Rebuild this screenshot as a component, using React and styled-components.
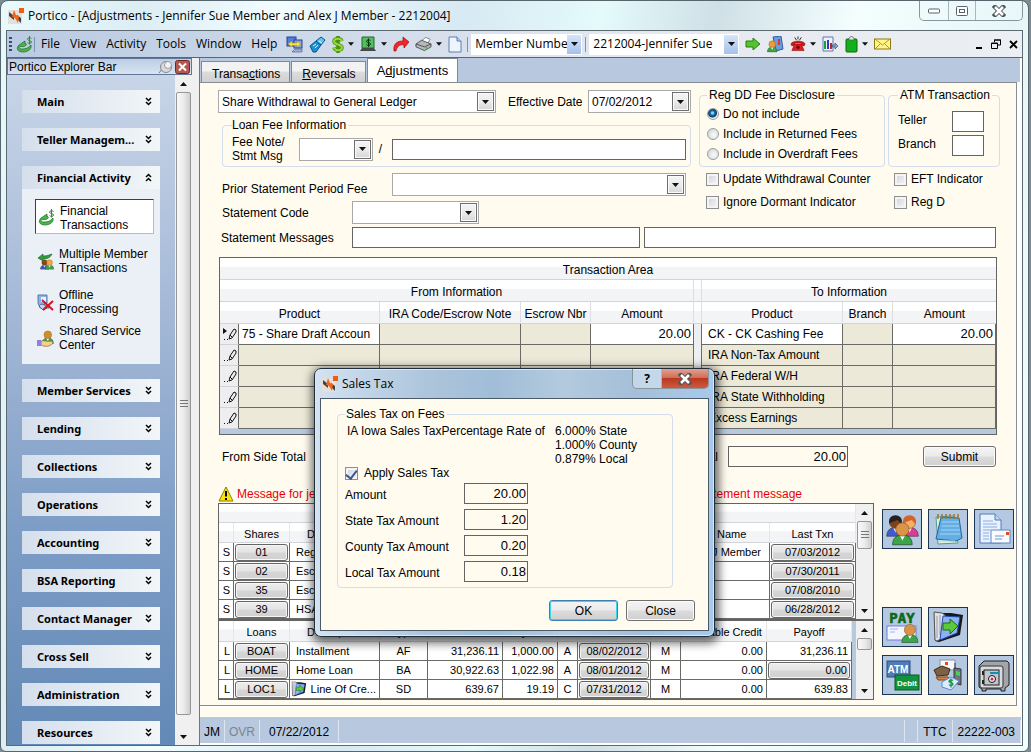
import { useState } from "react";
import styled, { createGlobalStyle, css } from "styled-components";

const GlobalStyle = createGlobalStyle`
  * {
    box-sizing: border-box;
  }
  body {
    margin: 0;
    background: #7d8a92;
    font-family: "Liberation Sans", Arial, sans-serif;
    font-size: 12px;
    line-height: 14px;
    color: #000;
  }
  button, input, select {
    font: inherit;
    color: inherit;
    margin: 0;
  }
`;

const chromeFont = css`
  font-family: "Open Sans", "Noto Sans", sans-serif;
  font-size: 12px;
`;

// ---------- window frame ----------
const Window = styled.div`
  position: relative;
  display: flex;
  flex-direction: column;
  min-height: 100vh;
  margin-right: 2px;
  padding: 0 5px 5px;
  border: 1px solid #56666c;
  border-radius: 8px 8px 6px 6px;
  background: linear-gradient(100deg, #e9fafc 0%, #dcedf4 12%, #f2fdff 24%, #d7e9f3 40%, #e4fafb 52%, #cfe0e6 62%, #f4feff 74%, #e6f6f6 88%, #f4ffff 100%);
`;

const TitleBar = styled.header`
  ${chromeFont}
  display: flex;
  align-items: center;
  gap: 4px;
  height: 29px;
  padding-left: 2px;
`;

const WindowTitle = styled.h1`
  flex: 1;
  margin: 0;
  font-size: inherit;
  font-weight: normal;
  white-space: nowrap;
`;

const WindowButtons = styled.div`
  display: flex;
  align-self: flex-start;
  height: 20px;
  border: 1px solid #87969b;
  border-top: 0;
  border-radius: 0 0 5px 5px;
  overflow: hidden;
`;

const WindowButton = styled.button`
  display: flex;
  align-items: center;
  justify-content: center;
  width: ${(props) => props.$width}px;
  padding: 0;
  border: 0;
  border-left: 1px solid #a9b6ba;
  background: ${(props) =>
    props.$danger
      ? "linear-gradient(#e2a091 0%, #d07058 45%, #b93a20 50%, #d0583e 100%)"
      : "rgba(240, 250, 252, 0.4)"};
  &:first-child {
    border-left: 0;
  }
`;

const Frame = styled.div`
  flex: 1;
  display: flex;
  flex-direction: column;
  border: 1px solid #5d6a72;
  background: #f0f0f0;
`;

// ---------- menu bar ----------
const MenuBar = styled.nav`
  ${chromeFont}
  display: flex;
  align-items: center;
  height: 27px;
  padding: 0 4px 0 2px;
  border-bottom: 1px solid #5f656d;
  background: linear-gradient(90deg, #b9cae2, #e4e9f0 62%, #eceff3);
  white-space: nowrap;
`;

const MenuItem = styled.button`
  padding: 0 5px;
  border: 0;
  background: none;
`;

const Grip = styled.span`
  width: 3px;
  height: 15px;
  margin-right: 4px;
  background: repeating-linear-gradient(#36507c 0 2px, transparent 2px 4px);
`;

const Divider = styled.span`
  width: 1px;
  height: 15px;
  margin: 0 1px;
  background: #7d93b4;
`;

const ToolIcons = styled.div`
  display: flex;
  align-items: center;
  gap: ${(props) => props.$gap}px;
  margin: 0 4px;
`;

const ToolButton = styled.button`
  display: flex;
  align-items: center;
  gap: 4px;
  padding: 0;
  border: 0;
  background: none;
`;

const ToolSelectBox = styled.label`
  display: flex;
  width: ${(props) => props.$width}px;
  height: 21px;
  margin: 0 2px;
  border: 1px solid #fff;
  background: #fff;
`;

const ToolSelect = styled.select`
  flex: 1;
  min-width: 0;
  padding: 0 0 0 3px;
  border: 0;
  background: none;
  appearance: none;
  outline: none;
`;

const ToolArrow = styled.span`
  display: flex;
  align-items: center;
  justify-content: center;
  width: 14px;
  background: linear-gradient(#d5e4f8, #a4c2ea);
`;

const ChildControls = styled.div`
  display: flex;
  align-items: center;
  gap: 8px;
  margin-left: auto;
`;

// ---------- explorer bar ----------
const Body = styled.div`
  flex: 1;
  display: flex;
`;

const Sidebar = styled.aside`
  display: flex;
  flex-direction: column;
  width: 185px;
  flex-shrink: 0;
`;

const SidebarHeader = styled.div`
  display: flex;
  align-items: center;
  gap: 2px;
  height: 17px;
  padding: 0 1px;
  border: 1px solid #62779a;
  background: linear-gradient(#bdcde3, #d9e4f2);
  h2 {
    flex: 1;
    margin: 0;
    font-size: 12px;
    font-weight: normal;
  }
`;

const HeaderButton = styled.button`
  display: flex;
  padding: 0;
  border: 0;
  background: none;
`;

const SidebarBody = styled.div`
  flex: 1;
  display: flex;
`;

const SectionList = styled.div`
  flex: 1;
  display: flex;
  flex-direction: column;
  gap: 15px;
  padding: 15px 15px 0;
  background: linear-gradient(#c8d5e8, #9db3d3 42%, #7d9dc6 68%, #6389b6);
`;

const SectionHead = styled.button`
  display: flex;
  align-items: center;
  justify-content: space-between;
  width: 100%;
  height: 23px;
  padding: 0 7px 0 15px;
  border: 0;
  background: linear-gradient(90deg, #d5dfec, #f2f6f8);
  font-family: "Noto Sans", sans-serif;
  font-size: 11px;
  font-weight: bold;
  white-space: nowrap;
`;

const SectionPanel = styled.div`
  padding: 10px 6px 12px 13px;
  background: #eaf0f5;
`;

const SectionLink = styled.a`
  display: flex;
  align-items: center;
  gap: 5px;
  margin-top: ${(props) => props.$space}px;
  padding-left: 2px;
  color: #000;
  text-decoration: none;
  ${(props) =>
    props.$active &&
    css`
      height: 35px;
      padding: 2px 0 0 2px;
      border: 1px solid;
      border-color: #3a4048 #a9bfd8 #a9bfd8 #3a4048;
      background: #fff;
    `}
`;

// ---------- scroll bars ----------
const Scroll = styled.div`
  display: flex;
  flex-direction: column;
  align-items: center;
  flex-shrink: 0;
  width: 17px;
  background: #f0f0f0;
`;

const ScrollArrow = styled.button`
  display: flex;
  align-items: center;
  justify-content: center;
  width: 100%;
  height: 17px;
  padding: 0;
  border: 0;
  background: none;
`;

const Track = styled.div`
  flex: 1;
  width: 15px;
  display: flex;
  flex-direction: column;
`;

const Thumb = styled.div`
  display: flex;
  align-items: center;
  justify-content: center;
  height: ${(props) => props.$size};
  border: 1px solid #979797;
  border-radius: 2px;
  background: linear-gradient(90deg, #f8f8f8, #ececec 50%, #cfcfcf);
`;

// ---------- main area ----------
const Main = styled.main`
  flex: 1;
  min-width: 0;
  display: flex;
  flex-direction: column;
  margin-left: 7px;
  border-left: 1px solid #6f767e;
  background: #fff;
`;

const Tabs = styled.div`
  display: flex;
  align-items: flex-end;
  height: 24px;
  padding-left: 1px;
  margin-right: 2px;
  background: #b8c9df;
`;

const Tab = styled.button`
  height: ${(props) => (props.$active ? 24 : 21)}px;
  padding: ${(props) => (props.$active ? "0 9px" : "3px 9px 0 10px")};
  border: 1px solid #84898f;
  border-bottom: 0;
  margin-right: ${(props) => (props.$active ? 0 : 1)}px;
  background: ${(props) =>
    props.$active ? "#fff" : "linear-gradient(#f2f2f2 45%, #dcdcdc 50%, #d0d0d0)"};
  font-size: ${(props) => (props.$active ? 13 : 12)}px;
`;

const Panel = styled.div`
  flex: 1;
  margin-right: 5px;
  padding: 5px 0 0 18px;
  border: 1px solid #868c94;
  border-left: 0;
  background: #fffbef;
`;

const TopForm = styled.div`
  display: grid;
  grid-template-columns: 473px 1fr;
  gap: 8px;
  margin-right: 16px;
`;

const FormRow = styled.div`
  display: flex;
  align-items: ${(props) => props.$align || "center"};
  height: ${(props) => props.$height || 23}px;
  margin-top: ${(props) => props.$space || 0}px;
`;

const FieldLabel = styled.label`
  width: ${(props) => (props.$width ? props.$width + "px" : "auto")};
  padding-left: ${(props) => props.$indent || 0}px;
  flex-shrink: 0;
`;

const ComboBox = styled.span`
  display: flex;
  align-items: center;
  width: ${(props) => props.$width}px;
  height: 23px;
  padding-right: 1px;
  border: 1px solid #a9a9a9;
  background: #fff;
`;

const ComboSelect = styled.select`
  flex: 1;
  min-width: 0;
  height: 21px;
  padding: 1px 3px 0;
  border: 0;
  background: none;
  appearance: none;
  outline: none;
`;

const ComboArrow = styled.span`
  display: flex;
  align-items: center;
  justify-content: center;
  width: 17px;
  height: 19px;
  border: 1px solid #6e6e6e;
  background: linear-gradient(#f4f4f4, #ebebeb 50%, #d6d6d6);
  box-shadow: inset 0 0 0 1px #fafafa;
`;

const TextInput = styled.input`
  width: ${(props) => (props.$width ? props.$width + "px" : "100%")};
  height: 21px;
  padding: 0 1px 0 3px;
  border: 1px solid #646464;
  background: ${(props) => (props.$plain ? "transparent" : "#fff")};
  outline: none;
  ${(props) =>
    props.$number &&
    css`
      font-size: 13px;
      text-align: right;
    `}
`;

const Group = styled.fieldset`
  min-width: 0;
  margin: 0;
  padding: ${(props) => props.$pad};
  border: 1px solid #d3ddeb;
  border-radius: 4px;
  legend {
    padding: 0 2px;
    line-height: 14px;
    white-space: nowrap;
  }
`;

const LoanGroup = styled(Group)`
  margin: 3px 0 0 4px;
  legend {
    padding-left: 0;
  }
`;

const LoanFields = styled.div`
  display: flex;
  align-items: center;
`;

const Slash = styled.span`
  width: 19px;
  padding-right: 4px;
  text-align: center;
`;

const RightForm = styled.div`
  display: grid;
  grid-template-columns: 186px 1fr;
  grid-template-rows: 79px 23px 23px;
  column-gap: 3px;
`;

const Option = styled.label`
  display: flex;
  align-items: center;
  gap: 4px;
  height: ${(props) => props.$height}px;
  padding-left: ${(props) => props.$indent || 0}px;
  white-space: nowrap;
`;

const CheckBox = styled.input`
  width: 13px;
  height: 13px;
  flex-shrink: 0;
  appearance: none;
  border: 1px solid #8e8f8f;
  background: linear-gradient(135deg, #cfd3d8, #f6f6f6);
  box-shadow: inset 0 0 0 2px #f4f4f4;
  display: flex;
  justify-content: center;
  &:checked::before {
    content: "";
    width: 5px;
    height: 9px;
    border: solid #3c5593;
    border-width: 0 2px 2px 0;
    transform: rotate(38deg);
  }
`;

const Radio = styled.input`
  width: 12px;
  height: 12px;
  flex-shrink: 0;
  appearance: none;
  border: 1px solid #9a9c9e;
  border-radius: 50%;
  background: radial-gradient(circle at 60% 60%, #fafafa, #ccd0d4);
  &:checked {
    background: radial-gradient(circle at 45% 40%, #7fd8f7 0 1px, #1f78ae 2px, #0b3a66 4px, #e8eef2 5px);
  }
`;

const AtmFields = styled.div`
  display: grid;
  grid-template-columns: 54px 32px;
  gap: 3px 0;
  label {
    padding-top: 2px;
  }
`;

const MessageRow = styled.div`
  display: grid;
  grid-template-columns: 130px 288px 1fr;
  column-gap: 4px;
  align-items: center;
  margin: 3px 20px 0 0;
  label {
    padding-left: 3px;
  }
`;

// ---------- transaction grid ----------
const headGradient = css`
  background: linear-gradient(#fff 40%, #f3f4f6 45%, #f3f4f6);
  border-bottom: 1px solid #d2d4d8;
`;

const GridBox = styled.div`
  margin: 9px 19px 0 1px;
  padding-bottom: 5px;
  border: 1px solid #646464;
  background: #b8c9df;
`;

const TxnTable = styled.table`
  width: 100%;
  table-layout: fixed;
  border-spacing: 0;
  th {
    ${headGradient}
    height: 22px;
    padding: 2px 0 0;
    border-right: 1px solid #dcdee2;
    font-weight: normal;
    white-space: nowrap;
  }
  th:last-child {
    border-right: 0;
  }
`;

const TxnCell = styled.td`
  height: 21px;
  padding: 0 2px;
  border-right: 1px solid #6b6b66;
  border-bottom: 1px solid #6b6b66;
  background: ${(props) => (props.$open ? "#fff" : "#ece9d8")};
  font-size: ${(props) => (props.$number ? 13 : 12)}px;
  text-align: ${(props) => (props.$number ? "right" : "left")};
  padding-left: ${(props) => props.$indent || 2}px;
  white-space: nowrap;
`;

const RowMarker = styled.td`
  height: 21px;
  padding: 0;
  border-right: 1px solid #6b6b66;
  background: #eeeef0;
  line-height: 0;
  text-align: right;
  border-bottom: 1px solid #d0d2d6;
`;

const GapCell = styled.td`
  padding: 0;
  border-right: 1px solid #6b6b66;
  background: #eeeff2;
`;

const Totals = styled.div`
  display: flex;
  align-items: center;
  gap: 10px;
  margin: 11px 20px 0 4px;
`;

const Spacer = styled.span`
  flex: 1;
`;

const PushButton = styled.button`
  width: ${(props) => props.$width}px;
  height: 21px;
  padding: 1px 0 0;
  border: 1px solid ${(props) => (props.$default ? "#3c7fb1" : "#707070")};
  border-radius: 3px;
  background: linear-gradient(#f4f4f4, #ebebeb 48%, #dcdcdc 52%, #cfcfcf);
  box-shadow: inset 0 0 0 1px ${(props) => (props.$default ? "#45d0f4" : "#fbfbfb")};
`;

const SubmitButton = styled(PushButton)`
  margin-left: 65px;
`;

const Warning = styled.div`
  display: flex;
  align-items: center;
  justify-content: space-between;
  height: 18px;
  margin-top: 18px;
  width: 584px;
  color: #e8000d;
  span {
    display: flex;
    gap: 3px;
    align-items: center;
  }
`;

// ---------- account grids ----------
const BottomRow = styled.div`
  display: flex;
  align-items: flex-start;
  gap: 8px;
  margin-right: 2px;
`;

const AccountBox = styled.div`
  flex: 1;
  min-width: 0;
  border: 1px solid #646464;
  background: #b8c9df;
  font-size: 11px;
`;

const AccountPart = styled.div`
  display: flex;
  & + & {
    border-top: 2px solid #646464;
  }
`;

const AccountTable = styled.table`
  flex: 1;
  min-width: 0;
  width: 0;
  margin-right: ${(props) => props.$gutter || 0}px;
  table-layout: fixed;
  border-spacing: 0;
  background: #fff;
  th {
    ${headGradient}
    height: ${(props) => props.$head}px;
    padding: 2px 0 0;
    border-right: 1px solid #e4e6ea;
    font-weight: normal;
    white-space: nowrap;
  }
  th:first-child[colspan] {
    height: 19px;
  }
`;

const AccountCell = styled.td`
  height: 19px;
  padding: ${(props) => (props.$button ? "0 1px" : "0 3px")};
  border-right: 1px solid #6b6b66;
  border-bottom: 1px solid #6b6b66;
  text-align: ${(props) => props.$align || "left"};
  white-space: nowrap;
  overflow: hidden;
  line-height: 13px;
`;

const NameCell = styled(AccountCell)`
  padding-right: 8px;
  text-align: right;
`;

const CellButton = styled.button`
  display: block;
  width: 100%;
  height: 17px;
  padding: 0 2px;
  border: 1px solid #666;
  border-radius: 3px;
  background: linear-gradient(#ededed, #e4e4e4 48%, #d6d6d6 52%, #d0d0d0);
  box-shadow: inset 0 0 0 1px #f6f6f6;
  line-height: 15px;
  text-align: ${(props) => props.$align || "center"};
`;

const IconText = styled.span`
  display: flex;
  align-items: center;
  gap: 4px;
  height: 18px;
  margin-left: -2px;
`;

const Actions = styled.div`
  padding-top: 6px;
`;

const ActionGrid = styled.div`
  display: grid;
  grid-template-columns: repeat(3, 40px);
  gap: 8px 6px;
  & + & {
    margin-top: 58px;
  }
`;

const ActionButton = styled.button`
  display: flex;
  align-items: center;
  justify-content: center;
  height: 40px;
  padding: 0;
  border: 1px solid #1d3552;
  background: #b5c8e1;
  grid-column: ${(props) => props.$column || "auto"};
`;

// ---------- status bar ----------
const StatusBar = styled.footer`
  display: flex;
  align-items: center;
  height: 26px;
  margin: 11px 1px 2px 0;
  padding: 2px 0 0;
  background: #b8c9df;
  box-shadow: 0 -9px 0 #fffbef;
`;

const StatusCell = styled.span`
  display: flex;
  align-items: center;
  height: 22px;
  padding: 2px ${(props) => props.$pad}px 0;
  border-right: 1px solid #dde5ef;
  color: ${(props) => (props.$muted ? "#7a8490" : "#000")};
`;

// ---------- sales tax dialog ----------
const Dialog = styled.section`
  position: absolute;
  top: 367px;
  left: 313px;
  width: 401px;
  padding: 0 5px 5px;
  border: 1px solid #1f2d3a;
  border-radius: 7px;
  background: linear-gradient(90deg, #d4e2f0 0%, #c2d5e8 12%, #adc5dc 28%, #a0bdd8 45%, #b3cade 62%, #a5bfda 80%, #a9c9ea 100%);
  box-shadow: inset 0 0 0 1px #d7e8f7, 1px 3px 10px 3px rgba(0, 0, 0, 0.6);
`;

const DialogTitle = styled.header`
  ${chromeFont}
  display: flex;
  align-items: center;
  gap: 4px;
  height: 29px;
  padding-left: 2px;
  h2 {
    flex: 1;
    margin: 0;
    font-size: inherit;
    font-weight: normal;
  }
`;

const DialogBody = styled.div`
  padding: 8px 13px 9px 16px;
  border: 1px solid #4c5a68;
  background: #fffbef;
`;

const TaxGroup = styled(Group)`
  margin-right: 22px;
  legend {
    padding-left: 1px;
  }
`;

const Rates = styled.div`
  display: grid;
  grid-template-columns: 206px 1fr;
  padding-left: 2px;
  white-space: nowrap;
  ul {
    margin: 0;
    padding: 0 0 0 2px;
    list-style: none;
  }
`;

const ApplyTax = styled(Option)`
  gap: 6px;
  padding-bottom: 3px;
`;

const TaxRow = styled.div`
  display: grid;
  grid-template-columns: 119px 64px;
  align-items: center;
  margin-bottom: 5px;
  label {
    padding-top: 3px;
  }
`;

const DialogButtons = styled.div`
  display: flex;
  justify-content: flex-end;
  gap: 8px;
  margin-top: 12px;
`;

// ---------- small drawings ----------
const Triangle = ({ up, size = 7 }) => (
  <svg width={size} height="4" viewBox="0 0 7 4" aria-hidden="true">
    <path d={up ? "M0 4h7L3.500 0z" : "M0 0h7L3.500 4z"} fill="#111" />
  </svg>
);

const Chevrons = ({ up }) => (
  <svg width="9" height="9" viewBox="0 0 9 9" fill="none" stroke="#000" strokeWidth="1.500">
    <path d={up ? "M2 4l2.500-2.500L7 4M2 8l2.500-2.500L7 8" : "M2 1l2.500 2.500L7 1M2 5l2.500 2.500L7 5"} />
  </svg>
);

const AppIcon = () => (
  <svg width="16" height="16" viewBox="0 0 16 16">
    <rect x="0" y="2" width="14" height="14" fill="#e6dfd9" />
    <path d="M1 4l5 4v4l-5-4zM9 7l4 3v5l-4-4z" fill="#3b4350" />
    <path d="M6 2l2 5 3 1-1 7-3-5-3-1z" fill="#f0661a" />
    <rect x="11" y="0" width="5" height="5" fill="#f35a12" />
  </svg>
);

const MoneyIcon = () => (
  <svg width="17" height="17" viewBox="0 0 17 17">
    <path d="M3 9l6-4v2.500c3 0 1 3-2 3H5c-2 0-3 2 0 2.500 4 .5 8-1 10-4 1 4-3 7-8 7-6 0-7-4-4-7z" fill="#4db44c" stroke="#156b20" strokeWidth=".7" />
    <path d="M15.500 2.500c-1-1-4-1-4 .7s4 1 4 2.800-3 1.800-4 .6M13.500 0v8.500" stroke="#3b8a32" fill="none" />
  </svg>
);

const Head = ({ x, y, s = 1, skin = "#f0a44c", hair, shirt = "#3aa648" }) => (
  <g transform={`translate(${x} ${y}) scale(${s})`}>
    <path d="M-1 17c0-5 3-7 7-7s7 2 7 7z" fill={shirt} stroke="#27402a" strokeWidth=".5" />
    <path d="M4 10l2 4 2-4z" fill="#fff" />
    <circle cx="6" cy="6" r="4.800" fill={skin} stroke="#8a5318" strokeWidth=".5" />
    {hair && <path d="M1 7C-1-2 13-2 11 7 9 6 8 4 8 4S4 5 1 7z" fill={hair} />}
  </g>
);

const MembersIcon = () => (
  <svg width="17" height="17" viewBox="0 0 17 17">
    <path d="M1 5l5-4v2c4 0 6-1 9-2-2 4-5 5-9 5v2z" fill="#2f9d3d" stroke="#135c1e" strokeWidth=".6" />
    <Head x={4} y={6} s={0.6} shirt="#3d55c4" skin="#7b4a22" />
    <Head x={9} y={6} s={0.6} />
  </svg>
);

const OfflineIcon = () => (
  <svg width="17" height="17" viewBox="0 0 17 17">
    <path d="M1 1h9v8l-3 1 5 4H3L1 9z" fill="#8fb2e6" stroke="#5a78ae" />
    <rect x="4" y="3" width="5" height="5" fill="#e9f3ff" />
    <path d="M2 12c2-3 6-2 8 2l-4 2z" fill="#c8d3e6" stroke="#5a6d92" />
    <path d="M5 6l11 10M16 7L6 16" stroke="#d8121e" strokeWidth="2" />
  </svg>
);

const ServiceIcon = () => (
  <svg width="17" height="17" viewBox="0 0 17 17">
    <Head x={6} y={0} s={0.8} skin="#d18f2c" />
    <path d="M4 11c3-1 6 1 11 0l1 2c-3 4-8 4-12 2z" fill="#f3d08c" stroke="#8c6420" strokeWidth=".7" />
    <rect x="0" y="10" width="4" height="6" fill="#8f7fe0" />
  </svg>
);

const ScreensIcon = () => (
  <svg width="17" height="17" viewBox="0 0 17 17">
    <rect x="1" y="1" width="9" height="9" fill="#4f7fe0" stroke="#24438f" />
    <rect x="8" y="4" width="8" height="8" fill="#7ea9ee" stroke="#24438f" />
    <path d="M6 16h10v-3H9z" fill="#9fb2cf" stroke="#44597d" strokeWidth=".6" />
    <path d="M2 8l4-3v2h5V5l4 3-4 3V9.500H6V11z" fill="#ffe23c" stroke="#b98d00" strokeWidth=".6" />
  </svg>
);

const TagIcon = () => (
  <svg width="17" height="17" viewBox="0 0 17 17">
    <path d="M1 10l6-5 5 4-5 7H4z" fill="#1594d4" stroke="#0b4f86" />
    <path d="M7 5l5-4 4 3-4 5z" fill="#5fc4ee" stroke="#0b4f86" />
    <path d="M4 10l3-2M6 12l3-3M10 5l3 2" stroke="#d9f4ff" />
  </svg>
);

const DollarIcon = () => (
  <svg width="12" height="17" viewBox="0 0 12 17">
    <path d="M10 5c-1-3-8-3-8 .5S10 8 10 11.500 3 15 2 11.500M6 0v17" stroke="#4c8a14" strokeWidth="3.500" fill="none" />
    <path d="M10 5c-1-3-8-3-8 .5S10 8 10 11.500 3 15 2 11.500" stroke="#8fdc36" strokeWidth="2" fill="none" />
  </svg>
);

const CashIcon = () => (
  <svg width="17" height="16" viewBox="0 0 17 16">
    <path d="M2 1h12v11H2z" fill="#58bd62" stroke="#1b6b2a" />
    <path d="M10.500 4.500c-1-1-4-1-4 .8s4 .8 4 2.700-3 1.800-4 .6M8.500 2.500v8.500" stroke="#06380f" fill="none" />
    <path d="M0 15l2-3h12l2 3z" fill="#424c44" />
  </svg>
);

const RedArrowIcon = () => (
  <svg width="16" height="16" viewBox="0 0 16 16">
    <path d="M1 15C0 8 4 5 10 5V1l6 5-5 6V9c-5-1-7 2-8 6z" fill="#f12626" stroke="#a00f0f" strokeWidth=".7" />
  </svg>
);

const PrinterIcon = () => (
  <svg width="17" height="16" viewBox="0 0 18 16">
    <path d="M7 5l4-4 5 2-3 5z" fill="#fff" stroke="#555" strokeWidth=".7" />
    <path d="M1 8l6-4 10 4v3l-7 4-9-4z" fill="#b5b7b9" stroke="#33363a" strokeWidth=".8" />
    <path d="M1 8l9 3 7-3" stroke="#4b4f54" fill="none" />
    <circle cx="12" cy="12" r="1.200" fill="#3fcf3f" />
  </svg>
);

const PageIcon = () => (
  <svg width="14" height="17" viewBox="0 0 14 17">
    <path d="M1 1h8l4 4v11H1z" fill="#eef5ff" stroke="#5c7db5" />
    <path d="M9 1v4h4" fill="#bcd2f0" stroke="#5c7db5" />
  </svg>
);

const GoIcon = () => (
  <svg width="16" height="14" viewBox="0 0 16 14">
    <path d="M1 4h7V1l7 6-7 6v-3H1z" fill="#54c42c" stroke="#2b7d12" />
  </svg>
);

const AddressIcon = () => (
  <svg width="17" height="17" viewBox="0 0 17 17">
    <path d="M6 1l8-1 2 13-7 2z" fill="#6a9bdc" stroke="#345c9c" />
    <path d="M11 3h2v6h-2z" fill="#d33" />
    <Head x={1} y={4} s={0.7} skin="#e89c3c" />
  </svg>
);

const PhoneIcon = () => (
  <svg width="16" height="16" viewBox="0 0 17 16">
    <path d="M5 1l2 3M12 1l-2 3M8.500 0v3" stroke="#222" />
    <path d="M1 8c1-4 14-4 15 0l-1 2-3-1V7H5v2l-3 1z" fill="#d81717" stroke="#7e0606" strokeWidth=".6" />
    <path d="M5 8h7l3 7H2z" fill="#e11d1d" stroke="#7e0606" strokeWidth=".6" />
    <circle cx="8.500" cy="11.500" r="1.800" fill="#7e0606" />
  </svg>
);

const ReportIcon = () => (
  <svg width="17" height="17" viewBox="0 0 17 17">
    <path d="M1 1h10v14H1z" fill="#eef3fb" stroke="#5c78ac" />
    <path d="M3 5v8" stroke="#1f9c3c" strokeWidth="2" />
    <path d="M6 4v9" stroke="#2740c4" strokeWidth="2" />
    <path d="M9 7v6" stroke="#c02424" strokeWidth="2" />
    <path d="M10 9h3V7l3 3-3 3v-2h-3z" fill="#7fa2df" stroke="#345" strokeWidth=".6" />
  </svg>
);

const ClipIcon = () => (
  <svg width="13" height="17" viewBox="0 0 13 17">
    <rect x="1" y="3" width="11" height="13" rx="1" fill="#14b01c" stroke="#0a6610" />
    <path d="M4 4V2l2-1.500h1L9 2v2z" fill="#e4e4e4" stroke="#555" strokeWidth=".7" />
  </svg>
);

const MailIcon = () => (
  <svg width="17" height="12" viewBox="0 0 17 12">
    <rect x=".5" y="1" width="16" height="10" fill="#fff58a" stroke="#8e7a10" />
    <path d="M1 1l7.500 6L16 1M1 11l5-5M16 11l-5-5" stroke="#b79a10" fill="none" />
  </svg>
);

const PencilIcon = ({ current }) => (
  <svg width="17" height="16" viewBox="0 0 17 16" fill="none" stroke="#111">
    {current && <path d="M2 2v6l4-3z" fill="#111" stroke="none" />}
    <path d="M8 13l1-4 4-6 2 1v2l-4 6zM9 9l2 2" />
    <path d="M3 13.500h1M6 13.500h1" />
  </svg>
);

const FolderArrow = ({ size }) => (
  <svg width={size} height={size} viewBox="0 0 32 32">
    <path d="M2 2h17l12 2-3 20L7 31 3 30z" fill="#15181f" />
    <path d="M2 1l8 1 3 2v22l-8 4-2-1z" fill="#dfe2e6" stroke="#555" />
    <path d="M5 5v22M8 4v20" stroke="#9aa0a8" />
    <path d="M11 5l17 1-3 16-17 7z" fill="#8db2f2" stroke="#2547b4" />
    <path d="M11 12h7V8l8 7-8 8v-4h-7z" fill="#5cc83a" stroke="#14700b" />
  </svg>
);

const WarningIcon = () => (
  <svg width="16" height="16" viewBox="0 0 16 16">
    <path d="M8 1l7 14H1z" fill="#ffe600" stroke="#8a7f00" strokeLinejoin="round" />
    <path d="M8 5v5.500M8 12v2" stroke="#000" strokeWidth="2" />
  </svg>
);

const FamilyIcon = () => (
  <svg width="34" height="34" viewBox="0 0 34 34">
    <Head x={3} y={3} s={1.25} skin="#7a431c" hair="#26201e" shirt="#4159d8" />
    <Head x={17} y={3} s={1.25} skin="#f4b066" hair="#d4622a" shirt="#e0389c" />
    <Head x={9} y={9} s={1.4} skin="#d99448" />
  </svg>
);

const NotepadIcon = () => (
  <svg width="32" height="34" viewBox="0 0 32 34">
    <path d="M4 5l17-1 5 27-20 1z" fill="#d9f2da" stroke="#5a9a8c" />
    <path d="M9 5l18 1 3 20-6 3-20-2z" fill="#63aee4" stroke="#1d679f" />
    <path d="M10 10h17M10 14h17M9 18h19M8 22h20M7 29h16" stroke="#a9d5f4" />
    <path d="M6 2v5M10 2v5M14 2v5M18 2v5M22 2v5M26 2v5" stroke="#9a7732" strokeWidth="1.500" />
  </svg>
);

const LetterIcon = () => (
  <svg width="34" height="34" viewBox="0 0 34 34">
    <path d="M3 2h15l6 6v23H3z" fill="#eaf2ff" stroke="#4d7cc4" />
    <path d="M18 2v6h6" fill="#bdd4f4" stroke="#4d7cc4" />
    <path d="M6 9h10M6 12h14M6 15h14M6 18h7M6 21h6M6 24h6M6 27h6" stroke="#8badde" />
    <rect x="14" y="18" width="19" height="13" fill="#f8fbff" stroke="#5f86c8" />
    <rect x="29" y="20" width="3" height="3" fill="#e64a19" />
    <path d="M18 24h9M18 27h7" stroke="#6f93cf" />
  </svg>
);

const PayIcon = () => (
  <svg width="34" height="34" viewBox="0 0 34 34">
    <text x="17" y="13" textAnchor="middle" fontFamily="DejaVu Sans Mono, monospace" fontWeight="bold" fontSize="14" fill="#0c6a14" stroke="#0c6a14" strokeWidth=".6">PAY</text>
    <rect x="2" y="16" width="29" height="14" fill="#f4f6ff" stroke="#6d7fe0" />
    <path d="M5 19h8M5 22h5" stroke="#a3aee8" />
    <Head x={18} y={13} s={1.15} skin="#d99448" />
  </svg>
);

const CardsIcon = () => (
  <svg width="36" height="34" viewBox="0 0 36 34">
    <rect x="3" y="3" width="23" height="16" fill="#4d7cb8" stroke="#2c4f80" />
    <text x="14" y="15" textAnchor="middle" fontFamily="Liberation Sans, sans-serif" fontWeight="bold" fontSize="10" fill="#fff">ATM</text>
    <rect x="11" y="17" width="24" height="15" fill="#12913f" stroke="#0a5a26" />
    <text x="23" y="28" textAnchor="middle" fontFamily="Liberation Sans, sans-serif" fontWeight="bold" fontSize="8" fill="#fff">Debit</text>
  </svg>
);

const ServicesIcon = () => (
  <svg width="34" height="34" viewBox="0 0 34 34">
    <rect x="9" y="2" width="15" height="10" fill="#f6f8fb" stroke="#8a94a8" />
    <rect x="14" y="4" width="3" height="3" fill="#e64a19" />
    <path d="M3 12l8-4 8 3-2 6-11 1z" fill="#7d6142" stroke="#3c2b19" />
    <path d="M5 19h12l2 3H7z" fill="#d8843c" stroke="#7f4716" />
    <path d="M24 5v6M23 10l7 1v16l-7-2z" fill="#6f747b" stroke="#33383f" />
    <path d="M25 13l4 1v4l-4-1z" fill="#4fce5c" />
    <path d="M11 24l9-5 8 4-8 9-9-3z" fill="#dcecff" stroke="#5f8cc8" />
    <path d="M22 22.500c-1-1-4-1-4 .8s4 .8 4 2.700-3 1.800-4 .6M20 20.500v9" stroke="#12913f" fill="none" strokeWidth="1.300" />
  </svg>
);

const SafeIcon = () => (
  <svg width="34" height="34" viewBox="0 0 34 34">
    <path d="M2 8l5-5h23l2 2v22l-4 3v3h-4v-2H9v2H5v-2l-3-2z" fill="#a3a6a8" stroke="#1d1f21" />
    <rect x="3" y="8" width="23" height="22" rx="2" fill="#d8dadb" stroke="#303335" />
    <rect x="7" y="12" width="15" height="15" fill="#c3c6c8" stroke="#1d1f21" />
    <path d="M13 15h9" stroke="#0e8fb8" strokeWidth="2" />
    <circle cx="15" cy="21" r="3.500" fill="#f4f4f4" stroke="#111" />
    <circle cx="15" cy="21" r="1.500" fill="#c81f6c" />
    <path d="M6 13v4M6 22v4" stroke="#222" strokeWidth="2" />
  </svg>
);

const PinIcon = () => (
  <svg width="15" height="14" viewBox="0 0 15 14">
    <path d="M1 13l4-5" stroke="#777" />
    <circle cx="8" cy="7" r="5.500" fill="#d7d9db" stroke="#85898e" />
    <circle cx="10" cy="5" r="3.500" fill="#f1f2f3" stroke="#9a9ea3" />
  </svg>
);

const CloseBoxIcon = () => (
  <svg width="15" height="14" viewBox="0 0 15 14">
    <rect x=".5" y=".5" width="14" height="13" rx="2" fill="#b4574c" stroke="#6d2a24" />
    <path d="M4 3.500l7 7M11 3.500l-7 7" stroke="#fff" strokeWidth="2" />
  </svg>
);

const CrossIcon = () => (
  <svg width="14" height="12" viewBox="-1 -1 14 12">
    <path d="M2 1l8 8M10 1L2 9" stroke="#4e575c" strokeWidth="4.500" strokeLinecap="square" />
    <path d="M2 1l8 8M10 1L2 9" stroke="#fff" strokeWidth="2.500" />
  </svg>
);

const Lines = () => (
  <svg width="8" height="8" viewBox="0 0 8 8">
    <path d="M0 .5h8M0 3.500h8M0 6.500h8" stroke="#777" />
  </svg>
);

// ---------- parts ----------
const Combo = ({ id, width, value, label }) => (
  <ComboBox $width={width}>
    <ComboSelect id={id} aria-label={label} defaultValue={value}>
      <option>{value}</option>
    </ComboSelect>
    <ComboArrow>
      <Triangle />
    </ComboArrow>
  </ComboBox>
);

const ToolCombo = ({ width, value, label }) => (
  <ToolSelectBox $width={width}>
    <ToolSelect aria-label={label} defaultValue={value}>
      <option>{value}</option>
    </ToolSelect>
    <ToolArrow>
      <Triangle />
    </ToolArrow>
  </ToolSelectBox>
);

const ScrollBar = ({ thumb, grip }) => (
  <Scroll>
    <ScrollArrow aria-label="Scroll up">
      <Triangle up />
    </ScrollArrow>
    <Track>
      <Thumb $size={thumb}>{grip && <Lines />}</Thumb>
    </Track>
    <ScrollArrow aria-label="Scroll down">
      <Triangle />
    </ScrollArrow>
  </Scroll>
);

const links = [
  { text: ["Financial", "Transactions"], icon: <MoneyIcon />, space: 0, active: true },
  { text: ["Multiple Member", "Transactions"], icon: <MembersIcon />, space: 13 },
  { text: ["Offline", "Processing"], icon: <OfflineIcon />, space: 13 },
  { text: ["Shared Service", "Center"], icon: <ServiceIcon />, space: 8 },
];

const sections = [
  "Main",
  "Teller Managem...",
  "Financial Activity",
  "Member Services",
  "Lending",
  "Collections",
  "Operations",
  "Accounting",
  "BSA Reporting",
  "Contact Manager",
  "Cross Sell",
  "Administration",
  "Resources",
];

const Explorer = () => (
  <Sidebar>
    <SidebarHeader>
      <h2>Portico Explorer Bar</h2>
      <HeaderButton aria-label="Pin">
        <PinIcon />
      </HeaderButton>
      <HeaderButton aria-label="Close bar">
        <CloseBoxIcon />
      </HeaderButton>
    </SidebarHeader>
    <SidebarBody>
      <SectionList>
        {sections.map((name) => {
          const open = name === "Financial Activity";
          return (
            <div key={name}>
              <SectionHead aria-expanded={open}>
                {name}
                <Chevrons up={open} />
              </SectionHead>
              {open && (
                <SectionPanel>
                  {links.map((link) => (
                    <SectionLink href="#" key={link.text[0]} $space={link.space} $active={link.active}>
                      {link.icon}
                      <span>
                        {link.text[0]}
                        <br />
                        {link.text[1]}
                      </span>
                    </SectionLink>
                  ))}
                </SectionPanel>
              )}
            </div>
          );
        })}
      </SectionList>
      <ScrollBar thumb="98%" grip />
    </SidebarBody>
  </Sidebar>
);

const Toolbar = () => (
  <MenuBar>
    <Grip />
    <MoneyIcon />
    <Divider />
    {["File", "View", "Activity", "Tools", "Window", "Help"].map((item) => (
      <MenuItem key={item}>{item}</MenuItem>
    ))}
    <ToolIcons $gap={6}>
      <ToolButton aria-label="Screens"><ScreensIcon /></ToolButton>
      <ToolButton aria-label="Tags"><TagIcon /></ToolButton>
      <ToolButton aria-label="Payments"><DollarIcon /><Triangle size={6} /></ToolButton>
      <ToolButton aria-label="Cash"><CashIcon /><Triangle size={6} /></ToolButton>
      <ToolButton aria-label="Forward"><RedArrowIcon /></ToolButton>
      <ToolButton aria-label="Print"><PrinterIcon /><Triangle size={6} /></ToolButton>
      <ToolButton aria-label="New page"><PageIcon /></ToolButton>
    </ToolIcons>
    <Divider />
    <ToolCombo width={111} value="Member Numbe" label="Search by" />
    <Divider />
    <ToolCombo width={150} value="2212004-Jennifer Sue" label="Member" />
    <ToolIcons $gap={6}>
      <ToolButton aria-label="Go"><GoIcon /></ToolButton>
      <ToolButton aria-label="Address"><AddressIcon /></ToolButton>
      <ToolButton aria-label="Phone"><PhoneIcon /><Triangle size={6} /></ToolButton>
      <ToolButton aria-label="Report"><ReportIcon /></ToolButton>
      <ToolButton aria-label="Clipboard"><ClipIcon /><Triangle size={6} /></ToolButton>
      <ToolButton aria-label="Mail"><MailIcon /></ToolButton>
    </ToolIcons>
    <ChildControls>
      <ToolButton aria-label="Minimize page">
        <svg width="8" height="9" viewBox="0 0 8 9"><path d="M1 8h6" stroke="#000" strokeWidth="2" /></svg>
      </ToolButton>
      <ToolButton aria-label="Restore page">
        <svg width="10" height="10" viewBox="0 0 10 10" fill="none" stroke="#000">
          <path d="M3.500 3V1h6v5H7M3 1h7" />
          <path d="M.5 4h6v5.500h-6zM0 4.500h7" />
        </svg>
      </ToolButton>
      <ToolButton aria-label="Close page">
        <svg width="9" height="9" viewBox="0 0 9 9"><path d="M1 1l7 7M8 1L1 8" stroke="#000" strokeWidth="1.800" /></svg>
      </ToolButton>
    </ChildControls>
  </MenuBar>
);

const AdjustmentForm = () => (
  <>
    <TopForm>
      <div>
        <FormRow $height={27}>
          <Combo width={278} value="Share Withdrawal to General Ledger" label="Adjustment type" />
          <FieldLabel htmlFor="effective" $width={92} $indent={12}>Effective Date</FieldLabel>
          <Combo id="effective" width={103} value="07/02/2012" />
        </FormRow>
        <LoanGroup $pad="3px 4px 3px 9px">
          <legend>Loan Fee Information</legend>
          <LoanFields>
            <FieldLabel htmlFor="feenote" $width={67}>
              Fee Note/
              <br />
              Stmt Msg
            </FieldLabel>
            <Combo id="feenote" width={74} value="" />
            <Slash>/</Slash>
            <TextInput $width={294} aria-label="Statement message text" />
          </LoanFields>
        </LoanGroup>
        <FormRow $space={6} $align="flex-end">
          <FieldLabel htmlFor="prior" $width={174} $indent={4}>Prior Statement Period Fee</FieldLabel>
          <Combo id="prior" width={294} value="" />
        </FormRow>
        <FormRow $space={5}>
          <FieldLabel htmlFor="code" $width={134} $indent={4}>Statement Code</FieldLabel>
          <Combo id="code" width={127} value="" />
        </FormRow>
      </div>
      <RightForm>
        <Group $pad="2px 7px 0">
          <legend>Reg DD Fee Disclosure</legend>
          {["Do not include", "Include in Returned Fees", "Include in Overdraft Fees"].map((text, i) => (
            <Option key={text} $height={20}>
              <Radio type="radio" name="disclosure" defaultChecked={i === 0} />
              {text}
            </Option>
          ))}
        </Group>
        <Group $pad="9px 9px 0">
          <legend>ATM Transaction</legend>
          <AtmFields>
            <label htmlFor="teller">Teller</label>
            <TextInput id="teller" />
            <label htmlFor="branch">Branch</label>
            <TextInput id="branch" />
          </AtmFields>
        </Group>
        <Option $height={24} $indent={7}><CheckBox type="checkbox" />Update Withdrawal Counter</Option>
        <Option $height={24} $indent={6}><CheckBox type="checkbox" />EFT Indicator</Option>
        <Option $height={24} $indent={7}><CheckBox type="checkbox" />Ignore Dormant Indicator</Option>
        <Option $height={24} $indent={6}><CheckBox type="checkbox" />Reg D</Option>
      </RightForm>
    </TopForm>
    <MessageRow>
      <label htmlFor="message1">Statement Messages</label>
      <TextInput id="message1" />
      <TextInput aria-label="Second statement message" />
    </MessageRow>
  </>
);

const toProducts = [
  "CK - CK Cashing Fee",
  "IRA Non-Tax Amount",
  "IRA Federal W/H",
  "IRA State Withholding",
  "Excess Earnings",
];

const TransactionGrid = () => (
  <GridBox>
    <TxnTable>
      <colgroup>
        {[19, 141, 141, 70, 103, 8, 141, 50].map((width, i) => (
          <col key={i} width={width} />
        ))}
        <col />
      </colgroup>
      <thead>
        <tr><th colSpan={9}>Transaction Area</th></tr>
        <tr>
          <th colSpan={5}>From Information</th>
          <th />
          <th colSpan={3}>To Information</th>
        </tr>
        <tr>
          <th colSpan={2}>Product</th>
          <th>IRA Code/Escrow Note</th>
          <th>Escrow Nbr</th>
          <th>Amount</th>
          <th />
          <th>Product</th>
          <th>Branch</th>
          <th>Amount</th>
        </tr>
      </thead>
      <tbody>
        {toProducts.map((product, i) => {
          const first = i === 0;
          return (
            <tr key={product}>
              <RowMarker><PencilIcon current={first} /></RowMarker>
              <TxnCell $open={first} $indent={3}>{first && "75 - Share Draft Accoun"}</TxnCell>
              <TxnCell />
              <TxnCell />
              <TxnCell $open={first} $number>{first && "20.00"}</TxnCell>
              <GapCell />
              <TxnCell $open={first} $indent={6}>{product}</TxnCell>
              <TxnCell />
              <TxnCell $open={first} $number>{first && "20.00"}</TxnCell>
            </tr>
          );
        })}
      </tbody>
    </TxnTable>
  </GridBox>
);

const shares = [
  ["01", "Regular", "Alex J Member", "07/03/2012"],
  ["02", "Escrow", "", "07/30/2011"],
  ["35", "Escrow", "", "07/08/2010"],
  ["39", "HSA", "", "06/28/2012"],
];

const loans = [
  ["BOAT", "Installment", "AF", "31,236.11", "1,000.00", "A", "08/02/2012", "0.00", "31,236.11"],
  ["HOME", "Home Loan", "BA", "30,922.63", "1,022.98", "A", "08/01/2012", "0.00", "0.00"],
  ["LOC1", "Line Of Cre...", "SD", "639.67", "19.19", "C", "07/31/2012", "0.00", "639.83"],
];

const Accounts = () => (
  <AccountBox>
    <AccountPart>
      <AccountTable $head={20}>
        <colgroup>
          {[15, 56, 90, 48, 75].map((width, i) => (
            <col key={i} width={width} />
          ))}
          <col />
          <col width={102} />
          <col width={86} />
        </colgroup>
        <thead>
          <tr><th colSpan={8} /></tr>
          <tr>
            <th />
            <th>Shares</th>
            <th>Description</th>
            <th />
            <th />
            <th />
            <th>Joint Name</th>
            <th>Last Txn</th>
          </tr>
        </thead>
        <tbody>
          {shares.map(([id, description, name, date]) => (
            <tr key={id}>
              <AccountCell $align="right">S</AccountCell>
              <AccountCell $button><CellButton>{id}</CellButton></AccountCell>
              <AccountCell>&nbsp;{description}</AccountCell>
              <AccountCell />
              <AccountCell />
              <AccountCell />
              <NameCell>{name}</NameCell>
              <AccountCell $button><CellButton>{date}</CellButton></AccountCell>
            </tr>
          ))}
        </tbody>
      </AccountTable>
      <ScrollBar thumb="28px" grip />
    </AccountPart>
    <AccountPart>
      <AccountTable $gutter={4} $head={21}>
        <colgroup>
          {[15, 56, 90, 48, 75, 55, 20].map((width, i) => (
            <col key={i} width={width} />
          ))}
          <col />
          <col width={30} />
          <col width={86} />
          <col width={85} />
        </colgroup>
        <thead>
          <tr>
            <th />
            <th>Loans</th>
            <th>Description</th>
            <th>Type</th>
            <th>Balance</th>
            <th>Payment</th>
            <th />
            <th>Next Due</th>
            <th />
            <th>Available Credit</th>
            <th>Payoff</th>
          </tr>
        </thead>
        <tbody>
          {loans.map(([id, description, type, balance, payment, code, date, credit, payoff]) => (
            <tr key={id}>
              <AccountCell $align="right">L</AccountCell>
              <AccountCell $button><CellButton>{id}</CellButton></AccountCell>
              <AccountCell>
                {id === "LOC1" ? (
                  <IconText><FolderArrow size={16} />{description}</IconText>
                ) : (
                  <>&nbsp;{description}</>
                )}
              </AccountCell>
              <AccountCell $align="center">{type}</AccountCell>
              <AccountCell $align="right">{balance}</AccountCell>
              <AccountCell $align="right">{payment}</AccountCell>
              <AccountCell $align="center">{code}</AccountCell>
              <AccountCell $button><CellButton>{date}</CellButton></AccountCell>
              <AccountCell $align="center">M</AccountCell>
              <AccountCell $align="right">{credit}</AccountCell>
              {id === "HOME" ? (
                <AccountCell $button><CellButton $align="right">{payoff}</CellButton></AccountCell>
              ) : (
                <AccountCell $align="right">{payoff}</AccountCell>
              )}
            </tr>
          ))}
        </tbody>
      </AccountTable>
      <ScrollBar thumb="12px" />
    </AccountPart>
  </AccountBox>
);

const taxRows = [
  ["Amount", "20.00"],
  ["State Tax Amount", "1.20"],
  ["County Tax Amount", "0.20"],
  ["Local Tax Amount", "0.18"],
];

const SalesTaxDialog = () => {
  const [apply, setApply] = useState(true);
  return (
    <Dialog role="dialog" aria-labelledby="tax-title">
      <DialogTitle>
        <AppIcon />
        <h2 id="tax-title">Sales Tax</h2>
        <WindowButtons>
          <WindowButton $width={28} aria-label="Help"><b>?</b></WindowButton>
          <WindowButton $width={47} $danger aria-label="Close dialog"><CrossIcon /></WindowButton>
        </WindowButtons>
      </DialogTitle>
      <DialogBody>
        <TaxGroup $pad="3px 7px 0">
          <legend>Sales Tax on Fees</legend>
          <Rates>
            <span>IA Iowa Sales TaxPercentage Rate of</span>
            <ul>
              <li>6.000% State</li>
              <li>1.000% County</li>
              <li>0.879% Local</li>
            </ul>
          </Rates>
          <ApplyTax $height={17}>
            <CheckBox type="checkbox" checked={apply} onChange={(e) => setApply(e.target.checked)} />
            Apply Sales Tax
          </ApplyTax>
          {taxRows.map(([label, value]) => (
            <TaxRow key={label}>
              <label htmlFor={label}>{label}</label>
              <TextInput id={label} defaultValue={value} $number $plain />
            </TaxRow>
          ))}
        </TaxGroup>
        <DialogButtons>
          <PushButton $width={69} $default>OK</PushButton>
          <PushButton $width={69}>Close</PushButton>
        </DialogButtons>
      </DialogBody>
    </Dialog>
  );
};

export default function App() {
  return (
    <Window>
      <GlobalStyle />
      <TitleBar>
        <AppIcon />
        <WindowTitle>Portico - [Adjustments - Jennifer Sue Member and Alex J Member - 2212004]</WindowTitle>
        <WindowButtons>
          <WindowButton $width={28} aria-label="Minimize">
            <svg width="12" height="6" viewBox="0 0 12 6"><rect x=".5" y="1" width="11" height="4" rx="1" fill="#fff" stroke="#59636a" /></svg>
          </WindowButton>
          <WindowButton $width={27} aria-label="Maximize">
            <svg width="12" height="10" viewBox="0 0 12 10" fill="#fff" stroke="#59636a">
              <rect x=".5" y=".5" width="11" height="9" rx="1" />
              <rect x="3.500" y="3.500" width="5" height="3" />
            </svg>
          </WindowButton>
          <WindowButton $width={47} aria-label="Close window"><CrossIcon /></WindowButton>
        </WindowButtons>
      </TitleBar>
      <Frame>
        <Toolbar />
        <Body>
          <Explorer />
          <Main>
            <Tabs role="tablist">
              <Tab role="tab">Transa<u>c</u>tions</Tab>
              <Tab role="tab"><u>R</u>eversals</Tab>
              <Tab role="tab" $active aria-selected>A<u>dj</u>ustments</Tab>
            </Tabs>
            <Panel>
              <AdjustmentForm />
              <TransactionGrid />
              <Totals>
                <span>From Side Total</span>
                <Spacer />
                <label htmlFor="toside">To Side Total</label>
                <TextInput id="toside" $width={120} $number $plain defaultValue="20.00" />
                <SubmitButton $width={73}>Submit</SubmitButton>
              </Totals>
              <Warning>
                <span><WarningIcon />Message for jennifer</span>
                <span>statement message</span>
              </Warning>
              <BottomRow>
                <Accounts />
                <Actions>
                  <ActionGrid>
                    <ActionButton aria-label="Members"><FamilyIcon /></ActionButton>
                    <ActionButton aria-label="Notes"><NotepadIcon /></ActionButton>
                    <ActionButton aria-label="Letters"><LetterIcon /></ActionButton>
                  </ActionGrid>
                  <ActionGrid>
                    <ActionButton aria-label="Payroll"><PayIcon /></ActionButton>
                    <ActionButton aria-label="Transfer"><FolderArrow size={32} /></ActionButton>
                    <ActionButton aria-label="Cards" $column="1"><CardsIcon /></ActionButton>
                    <ActionButton aria-label="Services"><ServicesIcon /></ActionButton>
                    <ActionButton aria-label="Safe deposit"><SafeIcon /></ActionButton>
                  </ActionGrid>
                </Actions>
              </BottomRow>
            </Panel>
            <StatusBar>
              <StatusCell $pad={4}>JM</StatusCell>
              <StatusCell $pad={4} $muted>OVR</StatusCell>
              <StatusCell $pad={9}>07/22/2012</StatusCell>
              <Spacer />
              <StatusCell $pad={0} />
              <StatusCell $pad={6} />
              <StatusCell $pad={5}>TTC</StatusCell>
              <StatusCell $pad={5}>22222-003</StatusCell>
            </StatusBar>
          </Main>
        </Body>
      </Frame>
      <SalesTaxDialog />
    </Window>
  );
}
